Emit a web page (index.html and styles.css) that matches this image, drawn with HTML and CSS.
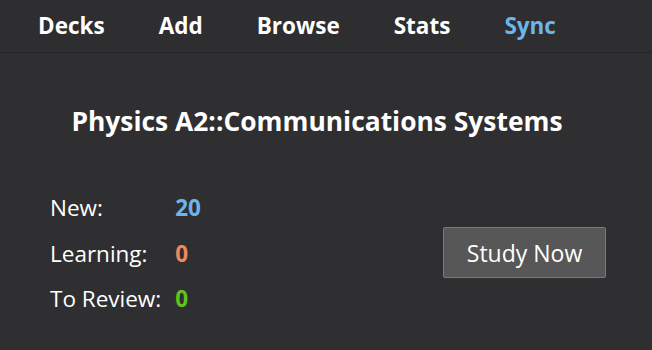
FILE: index.html
```html
<!DOCTYPE html>
<html lang="en">
<head>
    <meta charset="UTF-8">
    <meta name="viewport" content="width=device-width, initial-scale=1.0">
    <title>Deck Overview</title>
    <link rel="stylesheet" href="styles.css">
</head>
<body>
    <div class="toolbar">
        <a class="tab">Decks</a>
        <a class="tab">Add</a>
        <a class="tab">Browse</a>
        <a class="tab">Stats</a>
        <a class="tab tab-sync">Sync</a>
    </div>
    <div class="overview">
        <h1>Physics A2::Communications Systems</h1>
        <div class="summary">
            <table class="counts">
                <tr><td>New:</td><td class="num num-new">20</td></tr>
                <tr><td>Learning:</td><td class="num num-learn">0</td></tr>
                <tr><td>To Review:</td><td class="num num-review">0</td></tr>
            </table>
            <button class="btn-study">Study Now</button>
        </div>
    </div>
</body>
</html>
```

FILE: styles.css
```css
body {
    margin: 0;
    background-color: #2f2f31;
    color: #fff;
    font-family: "Open Sans", "Noto Sans", sans-serif;
    height: 350px;
    overflow: hidden;
}
.toolbar {
    display: flex;
    height: 51px;
    align-items: center;
    padding-left: 38px;
    padding-bottom: 1px;
    background-color: #2e2d2f;
    border-bottom: 1px solid #252527;
}
.tab {
    font-weight: bold;
    font-size: 22.5px;
    color: #fff;
    text-decoration: none;
    margin-right: 54px;
}
.tab-sync {
    color: #6ab5ec;
}
.overview {
    padding: 0 46px 0 50px;
}
h1 {
    font-size: 26.4px;
    text-align: center;
    margin: 50px 0 46px;
    padding-right: 22px;
}
.summary {
    display: flex;
    align-items: center;
    justify-content: space-between;
}
.counts {
    border-collapse: collapse;
    font-size: 22.5px;
}
.counts td {
    padding: 0;
    height: 45.5px;
}
.num {
    font-weight: bold;
    padding-left: 14px !important;
}
.num-new { color: #6ab5ec; }
.num-learn { color: #f0875f; }
.num-review { color: #5fc41b; }
.btn-study {
    width: 163px;
    height: 51px;
    background-color: #575758;
    border: 1px solid #4189c6;
    color: #fff;
    font-family: inherit;
    font-size: 23px;
    border-radius: 2px;
    margin-top: -1px;
}
```
